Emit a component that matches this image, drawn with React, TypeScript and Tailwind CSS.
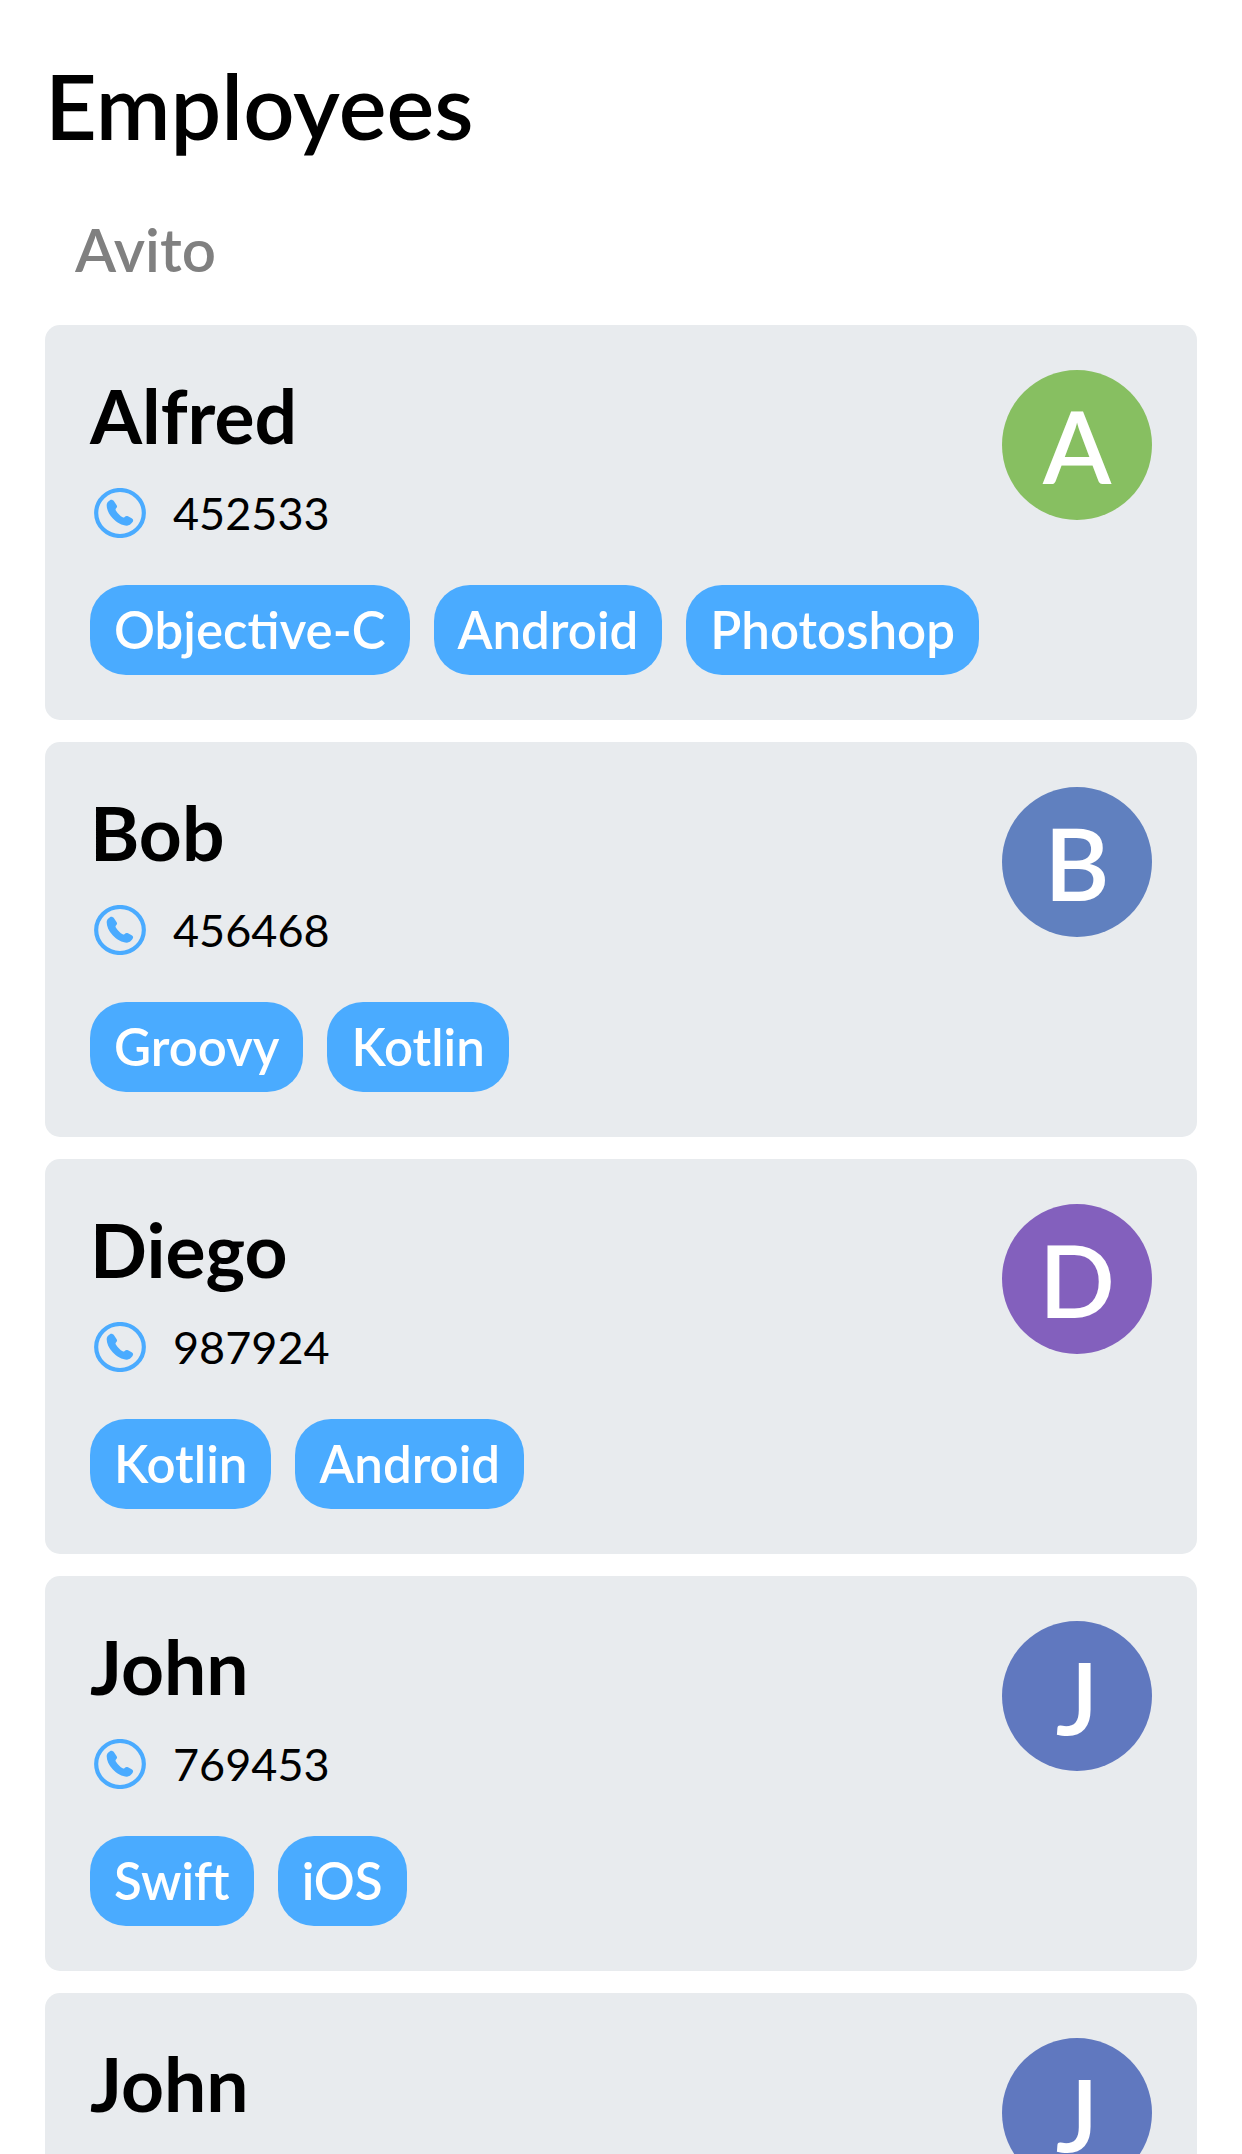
type Employee = {
  name: string;
  color: string;
  phone?: string;
  skills: string[];
};

const employees: Employee[] = [
  { name: "Alfred", color: "bg-[#87bf61]", phone: "452533", skills: ["Objective-C", "Android", "Photoshop"] },
  { name: "Bob", color: "bg-[#6080bf]", phone: "456468", skills: ["Groovy", "Kotlin"] },
  { name: "Diego", color: "bg-[#8360bd]", phone: "987924", skills: ["Kotlin", "Android"] },
  { name: "John", color: "bg-[#6078bf]", phone: "769453", skills: ["Swift", "iOS"] },
  { name: "John", color: "bg-[#6078bf]", skills: [] },
];

function PhoneIcon() {
  return (
    <svg viewBox="0 0 156 150" className="h-[50px] w-[52px] shrink-0 text-[#4aabff]" aria-hidden="true">
      <ellipse cx="78" cy="75" rx="71.5" ry="69" fill="none" stroke="currentColor" strokeWidth="12.5" />
      <path
        fill="currentColor"
        d="M38 51C38 45 42 40 48 36.500C52 34.500 57 36 60 40L67 50C70 54 70 57 67 60C64 63 64 65 66 68C71 76 79 84 86 88C88 89.500 90 89 92 87C95 84 98 83 102 85L113 91C118 94 119 98 115 103C111 109 105 113 99 113C84 113 68 104 56 91C44 78 38 64 38 51Z"
      />
    </svg>
  );
}

function EmployeeCard({ name, color, phone, skills }: Employee) {
  return (
    <li className="flex min-h-[395px] shrink-0 items-start justify-between rounded-[15px] bg-[#e8ebee] p-[45px]">
      <div className="min-w-0">
        <h3 className="text-[75px] leading-[90px] font-bold">{name}</h3>
        {phone && (
          <div className="mt-[26px] flex items-center gap-[27px] pl-1 text-[45px] leading-[54px]">
            <PhoneIcon />
            <span>{phone}</span>
          </div>
        )}
        {skills.length > 0 && (
          <ul className="mt-[45px] flex gap-6">
            {skills.map((skill) => (
              <li
                key={skill}
                className="rounded-[36px] bg-[#4aabff] px-6 text-[51px] leading-[90px] font-semibold whitespace-nowrap text-white"
              >
                {skill}
              </li>
            ))}
          </ul>
        )}
      </div>
      <div
        className={`flex size-[150px] shrink-0 items-center justify-center rounded-full text-[100px] leading-[150px] font-semibold text-white ${color}`}
        aria-hidden="true"
      >
        {name[0]}
      </div>
    </li>
  );
}

export default function App() {
  return (
    <main className="flex h-screen flex-col overflow-hidden bg-white px-[45px] pt-[51px] font-['Lato',sans-serif] text-black">
      <h1 className="text-[90px] leading-[108px] font-semibold">Employees</h1>
      <h2 className="mt-[54px] pl-[30px] text-[60px] leading-[72px] font-semibold text-[#808080]">Avito</h2>
      <ul className="mt-10 flex flex-col gap-[22px]">
        {employees.map((employee, index) => (
          <EmployeeCard key={index} {...employee} />
        ))}
      </ul>
    </main>
  );
}
